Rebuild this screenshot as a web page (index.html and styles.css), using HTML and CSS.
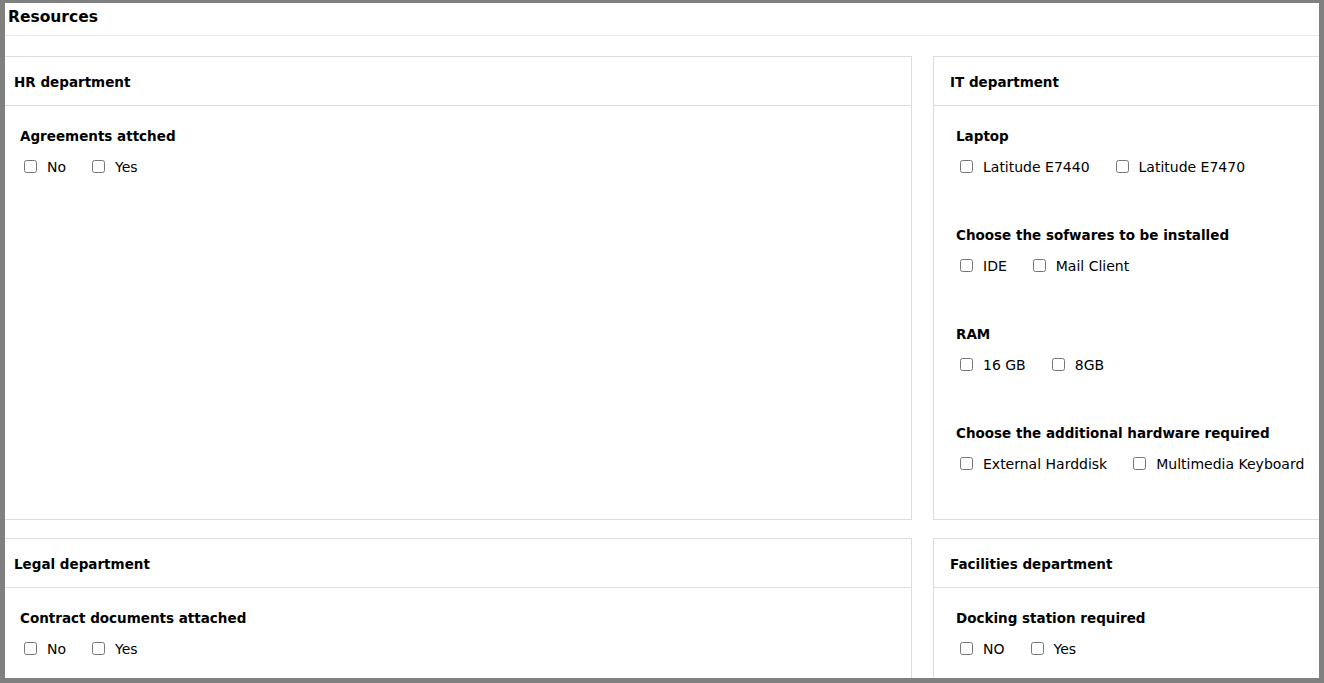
FILE: index.html
```html
<!DOCTYPE html>
<html>
<head>
<meta charset="utf-8">
<link rel="stylesheet" href="styles.css">
</head>
<body>
<div class="frame">
  <div class="title">Resources</div>
  <div class="grid">
    <section class="card">
      <div class="card-head">HR department</div>
      <div class="card-body">
        <div class="group">
          <div class="q">Agreements attched</div>
          <div class="opts">
            <label class="opt"><input type="checkbox"><span>No</span></label>
            <label class="opt"><input type="checkbox"><span>Yes</span></label>
          </div>
        </div>
      </div>
    </section>
    <section class="card">
      <div class="card-head">IT department</div>
      <div class="card-body">
        <div class="group">
          <div class="q">Laptop</div>
          <div class="opts">
            <label class="opt"><input type="checkbox"><span>Latitude E7440</span></label>
            <label class="opt"><input type="checkbox"><span>Latitude E7470</span></label>
          </div>
        </div>
        <div class="group">
          <div class="q">Choose the sofwares to be installed</div>
          <div class="opts">
            <label class="opt"><input type="checkbox"><span>IDE</span></label>
            <label class="opt"><input type="checkbox"><span>Mail Client</span></label>
          </div>
        </div>
        <div class="group">
          <div class="q">RAM</div>
          <div class="opts">
            <label class="opt"><input type="checkbox"><span>16 GB</span></label>
            <label class="opt"><input type="checkbox"><span>8GB</span></label>
          </div>
        </div>
        <div class="group">
          <div class="q">Choose the additional hardware required</div>
          <div class="opts">
            <label class="opt"><input type="checkbox"><span>External Harddisk</span></label>
            <label class="opt"><input type="checkbox"><span>Multimedia Keyboard</span></label>
          </div>
        </div>
      </div>
    </section>
    <section class="card">
      <div class="card-head">Legal department</div>
      <div class="card-body">
        <div class="group">
          <div class="q">Contract documents attached</div>
          <div class="opts">
            <label class="opt"><input type="checkbox"><span>No</span></label>
            <label class="opt"><input type="checkbox"><span>Yes</span></label>
          </div>
        </div>
      </div>
    </section>
    <section class="card">
      <div class="card-head">Facilities department</div>
      <div class="card-body">
        <div class="group">
          <div class="q">Docking station required</div>
          <div class="opts">
            <label class="opt"><input type="checkbox"><span>NO</span></label>
            <label class="opt"><input type="checkbox"><span>Yes</span></label>
          </div>
        </div>
      </div>
    </section>
  </div>
</div>
</body>
</html>
```
FILE: styles.css
```css
html, body {
  margin: 0;
  padding: 0;
  background: #fff;
}
body {
  font-family: "DejaVu Sans", Verdana, sans-serif;
  font-size: 14px;
  color: #000;
}
.frame {
  box-sizing: border-box;
  width: 1324px;
  height: 683px;
  border-style: solid;
  border-color: #808080;
  border-width: 3px 5px 5px 5px;
  overflow: hidden;
  background: #fff;
}
.title {
  height: 32px;
  line-height: 29px;
  padding-left: 3px;
  font-size: 15.5px;
  font-weight: bold;
  border-bottom: 1px solid #e8e8e8;
  margin-bottom: 20px;
}
.grid {
  display: grid;
  grid-template-columns: 915px 600px;
  column-gap: 21px;
  row-gap: 18px;
  margin-left: -8px;
}
.card {
  border: 1px solid #dddddd;
  background: #fff;
  white-space: nowrap;
}
.card-head {
  height: 47px;
  padding: 1px 16px 0 16px;
  line-height: 48px;
  font-size: 13.5px;
  font-weight: bold;
  border-bottom: 1px solid #dddddd;
}
.card-body {
  padding: 20px 22px 0 22px;
}
.group {
  padding-bottom: 48px;
}
.group:last-child {
  padding-bottom: 45px;
}
.q {
  font-size: 13.5px;
  font-weight: bold;
  line-height: 20px;
  margin-bottom: 11px;
}
.opts {
  display: flex;
  line-height: 20px;
}
.opt {
  display: inline-flex;
  align-items: center;
  margin-right: 22px;
}
.opt input {
  width: 13px;
  height: 13px;
  margin: 0 10px 0 4px;
  position: relative;
  top: -1px;
}
```
